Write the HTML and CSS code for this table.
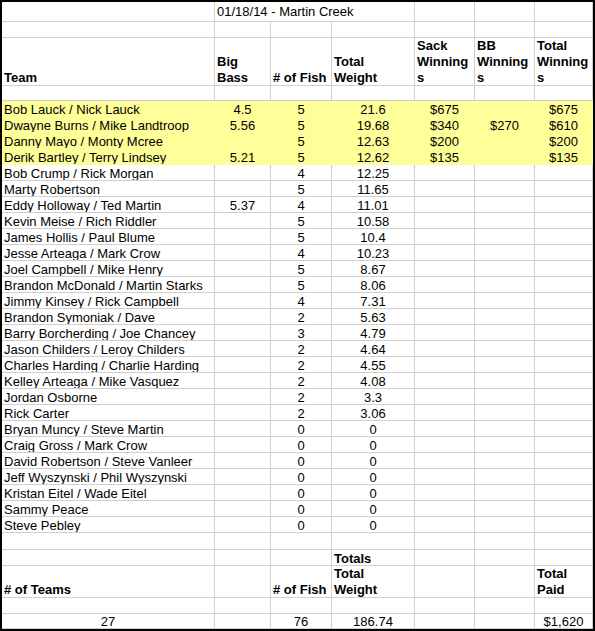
FILE: index.html
```html
<!DOCTYPE html>
<html>
<head>
<meta charset="utf-8">
<link rel="stylesheet" href="styles.css">
</head>
<body>
<div class="frame">
  <div class="row r-title">
    <div class="c"></div>
    <div class="c span3">01/18/14 - Martin Creek</div>
    <div class="c"></div><div class="c"></div><div class="c"></div>
  </div>
  <div class="row r-blank"><div class="c"></div><div class="c"></div><div class="c"></div><div class="c"></div><div class="c"></div><div class="c"></div><div class="c"></div></div>
  <div class="row r-head bold">
    <div class="c"><span>Team</span></div>
    <div class="c"><span>Big<br>Bass</span></div>
    <div class="c"><span># of Fish</span></div>
    <div class="c"><span>Total<br>Weight</span></div>
    <div class="c"><span>Sack<br>Winning<br>s</span></div>
    <div class="c"><span>BB<br>Winning<br>s</span></div>
    <div class="c"><span>Total<br>Winning<br>s</span></div>
  </div>
  <div class="row r-gap"><div class="c"></div><div class="c"></div><div class="c"></div><div class="c"></div><div class="c"></div><div class="c"></div><div class="c"></div></div>

  <div class="row hl"><div class="c">Bob Lauck / Nick Lauck</div><div class="c ctr">4.5</div><div class="c ctr">5</div><div class="c ctr">21.6</div><div class="c ctr">$675</div><div class="c ctr"></div><div class="c ctr">$675</div></div>
  <div class="row hl"><div class="c">Dwayne Burns / Mike Landtroop</div><div class="c ctr">5.56</div><div class="c ctr">5</div><div class="c ctr">19.68</div><div class="c ctr">$340</div><div class="c ctr">$270</div><div class="c ctr">$610</div></div>
  <div class="row hl"><div class="c">Danny Mayo / Monty Mcree</div><div class="c ctr"></div><div class="c ctr">5</div><div class="c ctr">12.63</div><div class="c ctr">$200</div><div class="c ctr"></div><div class="c ctr">$200</div></div>
  <div class="row hl"><div class="c">Derik Bartley / Terry Lindsey</div><div class="c ctr">5.21</div><div class="c ctr">5</div><div class="c ctr">12.62</div><div class="c ctr">$135</div><div class="c ctr"></div><div class="c ctr">$135</div></div>
  <div class="row"><div class="c">Bob Crump / Rick Morgan</div><div class="c ctr"></div><div class="c ctr">4</div><div class="c ctr">12.25</div><div class="c"></div><div class="c"></div><div class="c"></div></div>
  <div class="row"><div class="c">Marty Robertson</div><div class="c ctr"></div><div class="c ctr">5</div><div class="c ctr">11.65</div><div class="c"></div><div class="c"></div><div class="c"></div></div>
  <div class="row"><div class="c">Eddy Holloway / Ted Martin</div><div class="c ctr">5.37</div><div class="c ctr">4</div><div class="c ctr">11.01</div><div class="c"></div><div class="c"></div><div class="c"></div></div>
  <div class="row"><div class="c">Kevin Meise / Rich Riddler</div><div class="c ctr"></div><div class="c ctr">5</div><div class="c ctr">10.58</div><div class="c"></div><div class="c"></div><div class="c"></div></div>
  <div class="row"><div class="c">James Hollis / Paul Blume</div><div class="c ctr"></div><div class="c ctr">5</div><div class="c ctr">10.4</div><div class="c"></div><div class="c"></div><div class="c"></div></div>
  <div class="row"><div class="c">Jesse Arteaga / Mark Crow</div><div class="c ctr"></div><div class="c ctr">4</div><div class="c ctr">10.23</div><div class="c"></div><div class="c"></div><div class="c"></div></div>
  <div class="row"><div class="c">Joel Campbell / Mike Henry</div><div class="c ctr"></div><div class="c ctr">5</div><div class="c ctr">8.67</div><div class="c"></div><div class="c"></div><div class="c"></div></div>
  <div class="row"><div class="c">Brandon McDonald / Martin Starks</div><div class="c ctr"></div><div class="c ctr">5</div><div class="c ctr">8.06</div><div class="c"></div><div class="c"></div><div class="c"></div></div>
  <div class="row"><div class="c">Jimmy Kinsey / Rick Campbell</div><div class="c ctr"></div><div class="c ctr">4</div><div class="c ctr">7.31</div><div class="c"></div><div class="c"></div><div class="c"></div></div>
  <div class="row"><div class="c">Brandon Symoniak / Dave</div><div class="c ctr"></div><div class="c ctr">2</div><div class="c ctr">5.63</div><div class="c"></div><div class="c"></div><div class="c"></div></div>
  <div class="row"><div class="c">Barry Borcherding / Joe Chancey</div><div class="c ctr"></div><div class="c ctr">3</div><div class="c ctr">4.79</div><div class="c"></div><div class="c"></div><div class="c"></div></div>
  <div class="row"><div class="c">Jason Childers / Leroy Childers</div><div class="c ctr"></div><div class="c ctr">2</div><div class="c ctr">4.64</div><div class="c"></div><div class="c"></div><div class="c"></div></div>
  <div class="row"><div class="c">Charles Harding / Charlie Harding</div><div class="c ctr"></div><div class="c ctr">2</div><div class="c ctr">4.55</div><div class="c"></div><div class="c"></div><div class="c"></div></div>
  <div class="row"><div class="c">Kelley Arteaga / Mike Vasquez</div><div class="c ctr"></div><div class="c ctr">2</div><div class="c ctr">4.08</div><div class="c"></div><div class="c"></div><div class="c"></div></div>
  <div class="row"><div class="c">Jordan Osborne</div><div class="c ctr"></div><div class="c ctr">2</div><div class="c ctr">3.3</div><div class="c"></div><div class="c"></div><div class="c"></div></div>
  <div class="row"><div class="c">Rick Carter</div><div class="c ctr"></div><div class="c ctr">2</div><div class="c ctr">3.06</div><div class="c"></div><div class="c"></div><div class="c"></div></div>
  <div class="row"><div class="c">Bryan Muncy / Steve Martin</div><div class="c ctr"></div><div class="c ctr">0</div><div class="c ctr">0</div><div class="c"></div><div class="c"></div><div class="c"></div></div>
  <div class="row"><div class="c">Craig Gross / Mark Crow</div><div class="c ctr"></div><div class="c ctr">0</div><div class="c ctr">0</div><div class="c"></div><div class="c"></div><div class="c"></div></div>
  <div class="row"><div class="c">David Robertson / Steve Vanleer</div><div class="c ctr"></div><div class="c ctr">0</div><div class="c ctr">0</div><div class="c"></div><div class="c"></div><div class="c"></div></div>
  <div class="row"><div class="c">Jeff Wyszynski / Phil Wyszynski</div><div class="c ctr"></div><div class="c ctr">0</div><div class="c ctr">0</div><div class="c"></div><div class="c"></div><div class="c"></div></div>
  <div class="row"><div class="c">Kristan Eitel / Wade Eitel</div><div class="c ctr"></div><div class="c ctr">0</div><div class="c ctr">0</div><div class="c"></div><div class="c"></div><div class="c"></div></div>
  <div class="row"><div class="c">Sammy Peace</div><div class="c ctr"></div><div class="c ctr">0</div><div class="c ctr">0</div><div class="c"></div><div class="c"></div><div class="c"></div></div>
  <div class="row"><div class="c">Steve Pebley</div><div class="c ctr"></div><div class="c ctr">0</div><div class="c ctr">0</div><div class="c"></div><div class="c"></div><div class="c"></div></div>

  <div class="row r-gap2"><div class="c"></div><div class="c"></div><div class="c"></div><div class="c"></div><div class="c"></div><div class="c"></div><div class="c"></div></div>
  <div class="row bold"><div class="c"></div><div class="c"></div><div class="c"></div><div class="c">Totals</div><div class="c"></div><div class="c"></div><div class="c"></div></div>
  <div class="row r-head2 bold">
    <div class="c"><span># of Teams</span></div>
    <div class="c"></div>
    <div class="c"><span># of Fish</span></div>
    <div class="c"><span>Total<br>Weight</span></div>
    <div class="c"></div>
    <div class="c"></div>
    <div class="c"><span>Total<br>Paid</span></div>
  </div>
  <div class="row"><div class="c"></div><div class="c"></div><div class="c"></div><div class="c"></div><div class="c"></div><div class="c"></div><div class="c"></div></div>
  <div class="row r-last"><div class="c ctr">27</div><div class="c"></div><div class="c ctr">76</div><div class="c ctr">186.74</div><div class="c"></div><div class="c"></div><div class="c ctr">$1,620</div></div>
</div>
</body>
</html>
```

FILE: styles.css
```css
html, body {
  margin: 0;
  padding: 0;
  background: #ffffff;
}

.frame {
  width: 595px;
  height: 631px;
  box-sizing: border-box;
  border: 2px solid #000000;
  overflow: hidden;
  font-family: "Liberation Sans", Arial, sans-serif;
  font-size: 13px;
  color: #000000;
}

.row {
  display: grid;
  grid-template-columns: 213px 56px 61px 83px 60px 60px 58px;
  height: 16px;
}

.c {
  box-sizing: border-box;
  border-right: 1px solid #d0d0d0;
  border-bottom: 1px solid #d0d0d0;
  display: flex;
  align-items: flex-end;
  padding: 0 2px;
  line-height: 12px;
  white-space: nowrap;
  overflow: hidden;
}

.ctr {
  justify-content: center;
}

.bold .c {
  font-weight: bold;
}

.r-title {
  height: 20px;
}

.r-title .c {
  padding-bottom: 3px;
}

.span3 {
  grid-column: span 3;
  overflow: visible;
}

.r-blank {
  height: 16px;
}

.r-head {
  height: 48px;
}

.r-head .c,
.r-head2 .c {
  line-height: 16px;
  overflow: visible;
}

.r-head .c span,
.r-head2 .c span {
  margin-bottom: -1px;
}

.r-gap {
  height: 15px;
}

.r-gap2 {
  height: 17px;
}

.r-head2 {
  height: 32px;
}

.r-last {
  height: 15px;
}

.hl .c {
  background: #ffff99;
  border-color: #ffff99;
}
```
